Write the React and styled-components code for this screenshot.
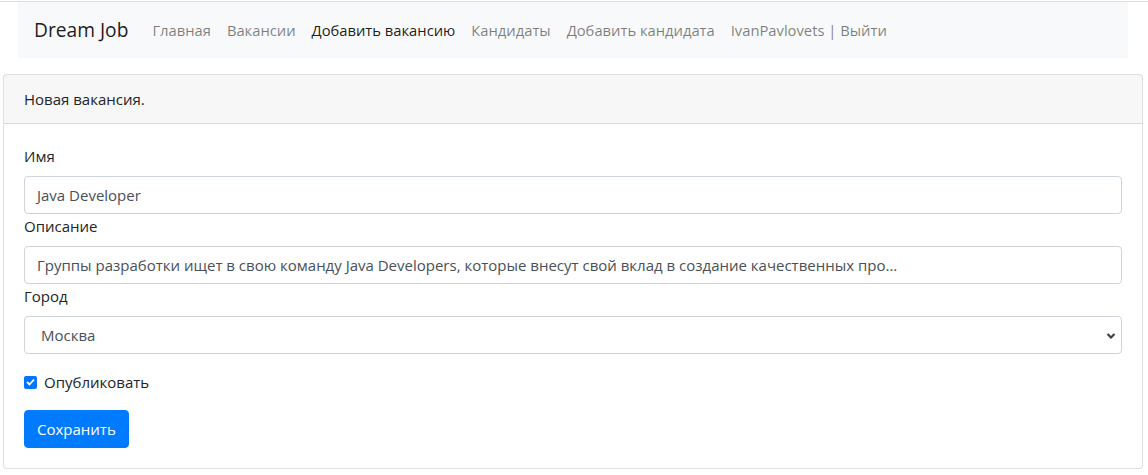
import React from "react";
import styled, { createGlobalStyle } from "styled-components";

const Global = createGlobalStyle`
  html, body { margin: 0; padding: 0; background: #fff; }
  body {
    font-family: "Open Sans", "Noto Sans", "Liberation Sans", sans-serif;
    font-size: 15px;
    line-height: 24px;
    color: #212529;
  }
  * { box-sizing: border-box; }
`;

const TopRule = styled.div`
  height: 1px;
  margin-top: 1px;
  background: #dcdcdc;
`;

const Page = styled.div`
  width: 1140px;
  margin-left: 3px;
`;

const Container = styled.div`
  padding: 0 15px;
`;

const Navbar = styled.nav`
  display: flex;
  align-items: center;
  height: 56px;
  padding: 8px 16px;
  background: #f8f9fa;
`;

const Brand = styled.a`
  font-size: 19.2px;
  line-height: 30px;
  color: rgba(0, 0, 0, 0.9);
  margin-right: 16px;
  padding: 5px 0;
  white-space: nowrap;
`;

const NavList = styled.div`
  display: flex;
`;

const NavLink = styled.a`
  padding: 8px;
  font-size: 14.75px;
  white-space: nowrap;
  color: ${(p) => (p.$active ? "rgba(0,0,0,0.9)" : "rgba(0,0,0,0.5)")};
`;

const Card = styled.div`
  margin-top: 16px;
  border: 1px solid rgba(0, 0, 0, 0.125);
  border-radius: 4px;
  background: #fff;
`;

const CardHeader = styled.div`
  padding: 12px 20px;
  background: rgba(0, 0, 0, 0.03);
  border-bottom: 1px solid rgba(0, 0, 0, 0.125);
`;

const CardBody = styled.form`
  padding: 20px;
  display: flex;
  flex-direction: column;
`;

const Label = styled.label`
  display: block;
  margin-bottom: 8px;
`;

const Input = styled.div`
  height: 38px;
  padding: 6px 12px;
  border: 1px solid #ced4da;
  border-radius: 4px;
  color: #495057;
  white-space: nowrap;
  overflow: hidden;
`;

const SelectBox = styled.div`
  position: relative;
  height: 38px;
  padding: 6px 12px 6px 16px;
  border: 1px solid #ced4da;
  border-radius: 4px;
  color: #495057;
  margin-bottom: 16px;
`;

const Chevron = styled.svg`
  position: absolute;
  right: 4px;
  top: 15px;
`;

const Check = styled.label`
  display: flex;
  align-items: center;
  gap: 7px;
  margin-bottom: 16px;
`;

const Box = styled.span`
  width: 13px;
  height: 13px;
  border-radius: 2px;
  background: #0075ff;
  display: inline-flex;
  align-items: center;
  justify-content: center;
`;

const Button = styled.button`
  align-self: flex-start;
  font: inherit;
  height: 38px;
  padding: 6px 12px;
  background: #007bff;
  color: #fff;
  border: 1px solid #007bff;
  border-radius: 4px;
`;

export default function App() {
  return (
    <>
      <Global />
      <TopRule />
      <Page>
        <Container>
          <Navbar>
            <Brand>Dream Job</Brand>
            <NavList>
              <NavLink>Главная</NavLink>
              <NavLink>Вакансии</NavLink>
              <NavLink $active>Добавить вакансию</NavLink>
              <NavLink>Кандидаты</NavLink>
              <NavLink>Добавить кандидата</NavLink>
              <NavLink>IvanPavlovets | Выйти</NavLink>
            </NavList>
          </Navbar>
        </Container>
        <Card>
          <CardHeader>Новая вакансия.</CardHeader>
          <CardBody onSubmit={(e) => e.preventDefault()}>
            <Label>Имя</Label>
            <Input>Java Developer</Input>
            <Label>Описание</Label>
            <Input>
              Группы разработки ищет в свою команду Java Developers, которые внесут свой вклад в создание качественных про...
            </Input>
            <Label>Город</Label>
            <SelectBox>
              Москва
              <Chevron width="12" height="8" viewBox="0 0 12 8">
                <path d="M2.5 2 L6 5.5 L9.5 2" fill="none" stroke="#3c4043" strokeWidth="2.2" />
              </Chevron>
            </SelectBox>
            <Check>
              <Box>
                <svg width="9" height="8" viewBox="0 0 9 8">
                  <path d="M1 4 L3.5 6.5 L8 1.5" fill="none" stroke="#fff" strokeWidth="1.8" />
                </svg>
              </Box>
              Опубликовать
            </Check>
            <Button type="submit">Сохранить</Button>
          </CardBody>
        </Card>
      </Page>
    </>
  );
}
